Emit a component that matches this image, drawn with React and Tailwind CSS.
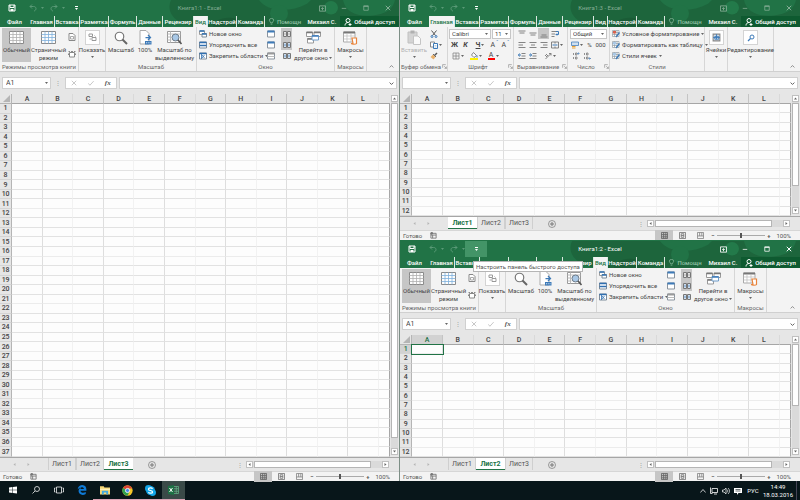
import React from "react";

const COLUMNS = ["A", "B", "C", "D", "E", "F", "G", "H", "I", "J", "K", "L"];
const SHEETS = ["Лист1", "Лист2", "Лист3"];
const TABS = [
  { name: "Главная", width: "w-[26px]" },
  { name: "Вставка", width: "w-[25px]" },
  { name: "Разметка", width: "w-[29px]" },
  { name: "Формуль", width: "w-[28px]" },
  { name: "Данные", width: "w-[26px]" },
  { name: "Рецензир", width: "w-[31px]" },
  { name: "Вид", width: "w-[14px]" },
  { name: "Надстрой", width: "w-[29px]" },
  { name: "Команда", width: "w-[28px]" },
];

/* ---------- icons ---------- */

function Svg({ size = "size-[8px]", box = "0 0 16 16", children }) {
  return (
    <svg
      className={`${size} shrink-0`}
      viewBox={box}
      fill="none"
      stroke="currentColor"
      strokeWidth="2"
      aria-hidden="true"
    >
      {children}
    </svg>
  );
}

function Caret({ className = "text-[#666]" }) {
  return (
    <svg className={`w-[3px] h-[2px] shrink-0 ${className}`} viewBox="0 0 6 4">
      <path d="M0 0h6L3 4z" fill="currentColor" />
    </svg>
  );
}

function SaveIcon() {
  return (
    <Svg>
      <path d="M2 2h12v12H2zM4 2v5h8V2" />
      <path d="M5 10h6v4H5z" fill="currentColor" stroke="none" />
    </Svg>
  );
}

function UndoIcon({ flip }) {
  return (
    <Svg>
      <g transform={flip ? "translate(16 0) scale(-1 1)" : undefined}>
        <path d="M6 1L2 5l4 4M2 5h7c7 0 6 8 1 9" />
      </g>
    </Svg>
  );
}

function GridIcon({ accent = "#b0b0b0", dim = "#8a8a8a" }) {
  return (
    <Svg size="w-[15px] h-[13px]" box="0 0 30 26">
      <path d="M1 1h28v24H1z" fill="#fdfdfd" stroke={dim} />
      <path d="M1 7h28M1 13h28M1 19h28M8 1v24M15 1v24M22 1v24" stroke={accent} strokeWidth="1.6" />
    </Svg>
  );
}

function PageIcon() {
  return (
    <Svg>
      <path d="M2 1h8l4 4v10H2z" fill="#fff" stroke="#888" />
      <path d="M5 7h6v5H5z" stroke="#aaa" />
    </Svg>
  );
}

function CustomViewIcon() {
  return (
    <Svg>
      <path d="M3 5h10v9H3z" fill="#fff" stroke="#888" />
      <path d="M1 3h3M6 3h4M12 3h3M1 7v3M15 7v3" stroke="#888" />
    </Svg>
  );
}

function ShowIcon() {
  return (
    <Svg size="size-[9px]" box="0 0 18 18">
      <path d="M2 2h7v5H2zM8 9h8v6H8z" stroke="#999" />
      <path d="M13 5l2 2M3 12h3" stroke="#aaa" />
    </Svg>
  );
}

function ZoomIcon() {
  return (
    <Svg size="size-[14px]" box="0 0 28 28">
      <circle cx="11" cy="11" r="8.5" fill="#fff" stroke="#777" strokeWidth="2.4" />
      <path d="M17 17l9 9" stroke="#666" strokeWidth="4" />
    </Svg>
  );
}

function HundredIcon() {
  return (
    <Svg size="w-[13px] h-[15px]" box="0 0 26 30">
      <path d="M2 1h12l6 6v21H2z" fill="#fff" stroke="#aaa" />
      <path d="M13 15h9M18 10l5 5-5 5" stroke="#3d7ab8" strokeWidth="2.5" />
      <path d="M12 22h13v7H12z" fill="#3d7ab8" stroke="none" />
      <path d="M14 25.5h9" stroke="#cfe0f0" strokeDasharray="2 1.5" />
    </Svg>
  );
}

function ZoomSelectionIcon() {
  return (
    <Svg size="w-[15px] h-[14px]" box="0 0 30 28">
      <path d="M1 1h26v22H1z" fill="#fff" stroke="#999" />
      <path d="M1 6h26M1 12h8M1 18h8M7 1v22" stroke="#bbb" />
      <circle cx="17" cy="13" r="7" fill="#a9c8e6" stroke="#6d7b88" />
      <path d="M22 18l7 8" stroke="#555" strokeWidth="3.4" />
    </Svg>
  );
}

function WindowIcon({ double, freeze }) {
  return (
    <Svg>
      <path d="M1 2h14v12H1z" fill="#fff" stroke="#7d8b99" />
      <path d="M1 3h14" stroke="#2f6fb0" strokeWidth="3" />
      {double && <path d="M1 9h14" stroke="#2f6fb0" strokeWidth="3" />}
      {freeze && <path d="M6 6l5 6M11 6l-5 6M5 3v11" stroke="#2f6fb0" strokeWidth="1.6" />}
    </Svg>
  );
}

function NewWindowIcon() {
  return (
    <Svg>
      <path d="M1 2h10v7H1z" fill="#fff" stroke="#999" />
      <path d="M1 2h10" stroke="#2f6fb0" strokeWidth="3" />
      <path d="M6 7h9v7H6z" fill="#fff" stroke="#7d8b99" />
      <path d="M6 8h9" stroke="#2f6fb0" strokeWidth="3" />
    </Svg>
  );
}

function PaneIcon({ gray }) {
  return (
    <Svg>
      <path d="M1 2h14v12H1z" fill="#fff" stroke="#8a949e" />
      <path d="M1 3h14" stroke={gray ? "#999" : "#3d7ab8"} strokeWidth="4" />
      {gray && <path d="M1 9h14" stroke="#bbb" />}
    </Svg>
  );
}

function SideIcon({ sync }) {
  return (
    <Svg>
      <path d="M1 3h6v10H1zM9 3h6v10H9z" fill="#fff" stroke="#777" />
      <path d="M4 5v6M12 5v6" stroke={sync ? "#3d7ab8" : "#999"} />
    </Svg>
  );
}

function SwitchIcon() {
  return (
    <Svg size="w-[15px] h-[13px]" box="0 0 30 26">
      <path d="M1 2h12v9H1zM16 2h13v9H16zM3 15h12v9H3z" fill="#fff" stroke="#999" />
      <path d="M1 3h12M16 3h13M3 16h12" stroke="#777" strokeWidth="3" />
      <path d="M12 9h13v9H12z" fill="#fff" stroke="#6f9cc9" />
      <path d="M12 10h13" stroke="#3d7ab8" strokeWidth="3" />
    </Svg>
  );
}

function MacroIcon() {
  return (
    <Svg size="w-[15px] h-[14px]" box="0 0 30 28">
      <path d="M1 2h23v20H1z" fill="#fff" stroke="#aaa" />
      <path d="M1 3h23" stroke="#777" strokeWidth="4" />
      <path d="M1 10h23M1 16h23M8 5v17M16 5v17" stroke="#bbb" strokeWidth="1.4" />
      <path d="M18 14h9v11c-1 2-10 2-10 0h3z" fill="#fff" stroke="#e8833a" strokeWidth="2.4" />
    </Svg>
  );
}

function PasteIcon() {
  return (
    <Svg size="w-[14px] h-[15px]" box="0 0 28 30">
      <path d="M2 4h18v22H2z" fill="#d4d4d4" stroke="#c0c0c0" />
      <path d="M7 1h8v6H7z" fill="#b0b0b0" stroke="none" />
      <path d="M13 12h9l5 5v12H13z" fill="#fafafa" stroke="#c4c4c4" />
    </Svg>
  );
}

function CutIcon() {
  return (
    <Svg>
      <path d="M3 1l8 10M13 1L5 11" stroke="#555" />
      <circle cx="4" cy="13" r="2" stroke="#3d7ab8" />
      <circle cx="12" cy="13" r="2" stroke="#3d7ab8" />
    </Svg>
  );
}

function CopyIcon() {
  return (
    <Svg>
      <path d="M1 2h8v10H1z" fill="#fff" stroke="#888" />
      <path d="M7 5h8v10H7z" fill="#fff" stroke="#3d7ab8" />
      <path d="M9 9h4M9 12h4" stroke="#6f9cc9" strokeWidth="1" />
    </Svg>
  );
}

function BrushIcon() {
  return (
    <Svg>
      <path d="M14 2L9 7" stroke="#555" strokeWidth="3" />
      <path d="M6 5l5 5-4 5-6-5z" fill="#e8b06a" stroke="none" />
      <path d="M6 4l6 6" stroke="#666" />
    </Svg>
  );
}

function BordersIcon() {
  return (
    <Svg>
      <path d="M2 2h12v12H2zM8 2v12M2 8h12" stroke="#888" strokeWidth="1.6" />
    </Svg>
  );
}

function FillIcon() {
  return (
    <Svg>
      <path d="M7 1l6 6-5 4-5-5z" fill="#fff" stroke="#666" strokeWidth="1.6" />
      <path d="M14 7v4" stroke="#3d7ab8" />
      <path d="M0 14h16" stroke="#fff000" strokeWidth="4" />
    </Svg>
  );
}

function LinesIcon({ d, accent }) {
  return (
    <Svg>
      <path d={d} stroke="#777" strokeWidth="1.8" />
      {accent && <path d={accent} stroke="#3d7ab8" />}
    </Svg>
  );
}

function CoinsIcon() {
  return (
    <Svg>
      <path d="M1 2h14v7H1z" fill="#cfe0f0" stroke="#3d7ab8" strokeWidth="1.5" />
      <path d="M2 11h7M2 14h7" stroke="#e8a33a" strokeWidth="2.4" />
    </Svg>
  );
}

function DecimalIcon({ left }) {
  return (
    <Svg>
      <path d="M3 2v4M7 2h3v4H7zM3 10v4M7 10h3v4H7z" stroke="#777" strokeWidth="1.6" />
      <path d={left ? "M15 3h-3M13 1l-2 2 2 2" : "M11 13h4M13 11l2 2-2 2"} stroke="#3d7ab8" strokeWidth="1.5" />
    </Svg>
  );
}

function StyleIcon({ accent }) {
  return (
    <Svg>
      <path d="M1 1h13v12H1zM1 5h13M1 9h13M5 1v12M10 1v12" fill="#fff" stroke="#8a949e" strokeWidth="1.3" />
      <path d="M2 2h6v5H2z" fill={accent} stroke="none" />
      <path d="M15 5l-7 9" stroke="#3d7ab8" strokeWidth="2.6" />
    </Svg>
  );
}

function CellsIcon() {
  return (
    <Svg size="size-[9px]">
      <path d="M2 2h12v12H2z" fill="#d7e4f0" stroke="#888" />
      <path d="M5 6h7v5H5zM8 2v9M2 8h12" stroke="#3d7ab8" strokeWidth="1.6" />
    </Svg>
  );
}

function FindIcon() {
  return (
    <Svg>
      <circle cx="10" cy="6" r="4" stroke="#3d7ab8" />
      <path d="M7 9l-5 5" stroke="#3d7ab8" strokeWidth="2.6" />
    </Svg>
  );
}

/* ---------- ribbon ---------- */

function Group({ label, launcher, width, children }) {
  return (
    <div className={`${width} shrink-0 flex flex-col border-r border-[#d6d6d6]`}>
      <div className="flex-1 flex pt-px">{children}</div>
      <div className="h-[9px] flex items-center text-[#666]">
        <span className="flex-1 text-center">{label}</span>
        {launcher && (
          <Svg size="size-[5px]">
            <path d="M2 12V2h10M7 7l7 7M14 8v6H8" stroke="#888" />
          </Svg>
        )}
      </div>
    </div>
  );
}

function BigButton({ icon, lines, width, arrow, active, boxed, muted }) {
  return (
    <button
      type="button"
      className={`${width} shrink-0 flex flex-col items-center ${active ? "bg-[#c6c6c6]" : ""} ${
        muted ? "text-[#b0b0b0]" : ""
      }`}
    >
      <span
        className={`h-[15px] mt-[2px] flex items-center justify-center ${
          boxed ? "w-[15px] bg-white border border-[#d4d4d4]" : ""
        }`}
      >
        {icon}
      </span>
      <span className="mt-px">
        {lines.map((line, i) => (
          <span key={line} className="flex items-center justify-center gap-px h-[8px]">
            {line}
            {arrow === "inline" && i === lines.length - 1 && <Caret />}
          </span>
        ))}
      </span>
      {arrow === "below" && (
        <span className="h-[6px] flex items-center">
          <Caret />
        </span>
      )}
    </button>
  );
}

function ListButton({ icon, children, arrow }) {
  return (
    <button type="button" className="h-[11px] flex items-center gap-[2px]">
      {icon}
      <span>{children}</span>
      {arrow && <Caret />}
    </button>
  );
}

function IconButton({ label, active, width = "w-[11px]", children }) {
  return (
    <button
      type="button"
      aria-label={label}
      className={`${width} h-[11px] shrink-0 flex items-center justify-center gap-px ${
        active ? "bg-[#c6c6c6]" : ""
      }`}
    >
      {children}
    </button>
  );
}

function ViewRibbon() {
  return (
    <>
      <Group label="Режимы просмотра книги" width="w-[79px]">
        <BigButton icon={<GridIcon />} lines={["Обычный"]} width="w-[29px] ml-[2px]" active />
        <BigButton icon={<GridIcon accent="#7fb0dc" />} lines={["Страничный", "режим"]} width="w-[35px]" />
        <div className="flex-1 flex flex-col justify-around items-center">
          <IconButton label="Разметка страницы"><PageIcon /></IconButton>
          <IconButton label="Представления"><CustomViewIcon /></IconButton>
        </div>
      </Group>
      <Group label="" width="w-[27px]">
        <BigButton icon={<ShowIcon />} lines={["Показать"]} width="w-[26px]" arrow="below" boxed />
      </Group>
      <Group label="Масштаб" width="w-[91px]">
        <BigButton icon={<ZoomIcon />} lines={["Масштаб"]} width="w-[30px]" />
        <BigButton icon={<HundredIcon />} lines={["100%"]} width="w-[18px]" />
        <BigButton icon={<ZoomSelectionIcon />} lines={["Масштаб по", "выделенному"]} width="w-[41px]" />
      </Group>
      <Group label="Окно" width="w-[138px]">
        <div className="w-[68px] pl-[2px] flex flex-col">
          <ListButton icon={<NewWindowIcon />}>Новое окно</ListButton>
          <ListButton icon={<WindowIcon double />}>Упорядочить все</ListButton>
          <ListButton icon={<WindowIcon freeze />} arrow>Закрепить области</ListButton>
        </div>
        <div className="w-[16px] flex flex-col">
          <IconButton label="Разделить"><PaneIcon /></IconButton>
          <IconButton label="Скрыть"><PaneIcon /></IconButton>
          <IconButton label="Отобразить"><PaneIcon gray /></IconButton>
        </div>
        <div className="flex flex-col">
          <IconButton label="Рядом" active><SideIcon /></IconButton>
          <IconButton label="Синхронная прокрутка" active><SideIcon sync /></IconButton>
          <IconButton label="Восстановить расположение"><SideIcon sync /></IconButton>
        </div>
        <BigButton icon={<SwitchIcon />} lines={["Перейти в", "другое окно"]} width="w-[42px]" arrow="inline" />
      </Group>
      <Group label="Макросы" width="w-[32px]">
        <BigButton icon={<MacroIcon />} lines={["Макросы"]} width="w-[31px]" arrow="below" />
      </Group>
    </>
  );
}

function RibbonSelect({ label, value, width }) {
  return (
    <span className={`${width} relative flex items-center bg-white border border-[#c6c6c6] h-[10px]`}>
      <select aria-label={label} defaultValue={value} className="w-full appearance-none pl-[2px] outline-none">
        <option>{value}</option>
      </select>
      <span className="absolute right-[2px] pointer-events-none">
        <Caret />
      </span>
    </span>
  );
}

function HomeRibbon() {
  return (
    <>
      <Group label="Буфер обмена" width="w-[48px]" launcher>
        <BigButton icon={<PasteIcon />} lines={["Вставить"]} width="w-[28px]" arrow="below" muted />
        <div className="flex flex-col">
          <IconButton label="Вырезать"><CutIcon /></IconButton>
          <IconButton label="Копировать" width="w-[15px]"><CopyIcon /><Caret /></IconButton>
          <IconButton label="Формат по образцу"><BrushIcon /></IconButton>
        </div>
      </Group>
      <Group label="Шрифт" width="w-[66px]" launcher>
        <div className="flex flex-col pl-px">
          <div className="h-[11px] flex items-center gap-px">
            <RibbonSelect label="Гарнитура" value="Calibri" width="w-[42px]" />
            <RibbonSelect label="Размер" value="11" width="w-[19px]" />
          </div>
          <div className="flex text-[7px]">
            <IconButton label="Полужирный"><b>Ж</b></IconButton>
            <IconButton label="Курсив"><b><i>К</i></b></IconButton>
            <IconButton label="Подчёркнутый" width="w-[18px]"><b><u>Ч</u></b><Caret /></IconButton>
            <IconButton label="Увеличить">A<sup className="text-[#3d7ab8]">ˆ</sup></IconButton>
            <IconButton label="Уменьшить">A<sup className="text-[#3d7ab8]">ˇ</sup></IconButton>
          </div>
          <div className="flex text-[7px]">
            <IconButton label="Границы" width="w-[18px]"><BordersIcon /><Caret /></IconButton>
            <IconButton label="Заливка" width="w-[18px]"><FillIcon /><Caret /></IconButton>
            <IconButton label="Цвет" width="w-[16px]">
              <span className="h-[8px] w-[7px] text-center leading-[7px] border-b-2 border-[#f00]">A</span>
              <Caret />
            </IconButton>
          </div>
        </div>
      </Group>
      <Group label="Выравнивание" width="w-[54px]" launcher>
        <div className="flex flex-col pl-[2px]">
          <div className="flex">
            <IconButton label="По верхнему краю"><LinesIcon d="M1 2h14M3 6h10" /></IconButton>
            <IconButton label="По середине"><LinesIcon d="M1 6h14M3 10h10" /></IconButton>
            <IconButton label="По нижнему краю" active><LinesIcon d="M3 10h10M1 14h14" /></IconButton>
            <IconButton label="Перенос"><LinesIcon d="M1 3h9M1 8h7M1 13h6" accent="M10 3h5v6h-5M12 7l-2 2 2 2" /></IconButton>
          </div>
          <div className="flex">
            <IconButton label="По левому краю"><LinesIcon d="M1 3h14M1 8h9M1 13h14" /></IconButton>
            <IconButton label="По центру"><LinesIcon d="M1 3h14M4 8h8M1 13h14" /></IconButton>
            <IconButton label="По правому краю"><LinesIcon d="M1 3h14M6 8h9M1 13h14" /></IconButton>
            <IconButton label="Объединить" width="w-[16px]">
              <LinesIcon d="M1 2h14v12H1zM8 2v3M8 11v3" accent="M3 8h10" />
              <Caret />
            </IconButton>
          </div>
          <div className="flex">
            <IconButton label="Уменьшить отступ"><LinesIcon d="M7 3h8M7 8h8M1 13h14" accent="M1 6h5M3 3L1 6l2 3" /></IconButton>
            <IconButton label="Увеличить отступ"><LinesIcon d="M7 3h8M7 8h8M1 13h14" accent="M0 6h5M3 3l2 3-2 3" /></IconButton>
            <IconButton label="Ориентация" width="w-[24px]">
              <LinesIcon d="M3 14L14 3M10 3h4v4M2 8l4-4M4 10l4-4" />
              <Caret />
            </IconButton>
          </div>
        </div>
      </Group>
      <Group label="Число" width="w-[42px]" launcher>
        <div className="flex flex-col pl-[2px]">
          <div className="h-[11px] flex items-center">
            <RibbonSelect label="Числовой формат" value="Общий" width="w-[37px]" />
          </div>
          <div className="flex">
            <IconButton label="Денежный" width="w-[14px]"><CoinsIcon /><Caret /></IconButton>
            <IconButton label="Процентный">%</IconButton>
            <IconButton label="С разделителями">000</IconButton>
          </div>
          <div className="flex">
            <IconButton label="Больше знаков"><DecimalIcon left /></IconButton>
            <IconButton label="Меньше знаков"><DecimalIcon /></IconButton>
          </div>
        </div>
      </Group>
      <Group label="Стили" width="w-[95px]">
        <div className="flex flex-col pl-[2px]">
          <ListButton icon={<StyleIcon accent="#d9604c" />} arrow>Условное форматирование</ListButton>
          <ListButton icon={<StyleIcon accent="#a9c8e6" />} arrow>Форматировать как таблицу</ListButton>
          <ListButton icon={<StyleIcon accent="#a9c8e6" />} arrow>Стили ячеек</ListButton>
        </div>
      </Group>
      <Group label="" width="w-[23px]">
        <BigButton icon={<CellsIcon />} lines={["Ячейки"]} width="w-[22px]" arrow="below" boxed />
      </Group>
      <Group label="" width="w-[46px]">
        <BigButton icon={<FindIcon />} lines={["Редактирование"]} width="w-[45px]" arrow="below" boxed />
      </Group>
    </>
  );
}

/* ---------- window parts ---------- */

function TitleArt() {
  return (
    <svg
      className="absolute inset-y-0 right-0 h-full w-[236px]"
      viewBox="0 0 236 28"
      preserveAspectRatio="none"
      aria-hidden="true"
    >
      <path d="M8 0h228v28H40C14 28 2 14 8 0z" fill="#1d653c" />
      <path d="M96 0c8 12 30 14 48 4l4-4zM180 0c2 12 14 18 30 16s20-8 22-16z" fill="#217346" />
      <circle cx="116" cy="14" r="9" fill="#217346" />
      <circle cx="168" cy="8" r="7" fill="#237a4a" />
      <path d="M50 28c0-8 14-12 24-8l10 8z" fill="#1a5c36" />
    </svg>
  );
}

function TitleBar({ title, active, menuOpen }) {
  return (
    <div className={`relative h-[16px] flex items-center ${active ? "text-white" : "text-[#86ae96]"}`}>
      <div className="flex-1 basis-0 self-stretch flex items-center">
        <button type="button" aria-label="Сохранить" className="ml-[8px] text-white"><SaveIcon /></button>
        <button type="button" aria-label="Отменить" className="ml-[13px] flex items-center gap-[4px] text-[#5a9a77]">
          <UndoIcon />
          <Caret className="text-[#5a9a77]" />
        </button>
        <button type="button" aria-label="Вернуть" className="ml-[6px] flex items-center gap-[4px] text-[#5a9a77]">
          <UndoIcon flip />
          <Caret className="text-[#5a9a77]" />
        </button>
        <button
          type="button"
          aria-label="Настроить панель быстрого доступа"
          className={`w-[22px] self-stretch flex flex-col items-center justify-center gap-px ${
            menuOpen ? "bg-[#439467]" : ""
          }`}
        >
          <span className="w-[3px] h-px bg-white" />
          <Caret className="text-white" />
        </button>
      </div>
      <span>{title}</span>
      <div className="flex-1 basis-0 flex justify-end">
        <button type="button" aria-label="Параметры ленты" className="w-[22px] flex justify-center">
          <Svg size="size-[7px]"><path d="M1 2h14v12H1zM8 12V6M5 9l3-3 3 3" /></Svg>
        </button>
        <button type="button" aria-label="Свернуть" className="w-[22px] flex justify-center">
          <Svg size="size-[6px]"><path d="M2 9h12" /></Svg>
        </button>
        <button type="button" aria-label="Развернуть" className="w-[22px] flex justify-center">
          <Svg size="size-[6px]"><path d="M2 2h12v12H2zM2 4h12" /></Svg>
        </button>
        <button type="button" aria-label="Закрыть" className="w-[22px] flex justify-center">
          <Svg size="size-[6px]"><path d="M2 2l12 12M14 2L2 14" strokeWidth="2.6" /></Svg>
        </button>
      </div>
    </div>
  );
}

function TabStrip({ current }) {
  return (
    <div className="relative h-[11px] flex text-white font-medium">
      <button type="button" className="w-[29px]">Файл</button>
      {TABS.map((tab) => (
        <button
          key={tab.name}
          type="button"
          className={`${tab.width} shrink-0 whitespace-nowrap overflow-hidden border-r border-[#dbe9e1] ${
            tab.name === current ? "bg-[#f3f3f3] text-[#217346]" : ""
          }`}
        >
          {tab.name}
        </button>
      ))}
      <button type="button" className="flex-1 flex items-center justify-center gap-[2px] text-[#8fc0a4]">
        <Svg size="size-[7px]">
          <path d="M6 11c0-3-3-3-3-6a5 4 0 0110 0c0 3-3 3-3 6zM6 14h4" strokeWidth="1.6" />
        </Svg>
        Помощн
      </button>
      <button type="button" className="w-[36px]">Михаил С.</button>
      <button type="button" className="w-[59px] flex items-center justify-center gap-[2px] bg-[#0e5a30]">
        <Svg size="size-[8px]">
          <circle cx="8" cy="5" r="4" />
          <path d="M2 15c0-4 3-6 6-6M9 13h6M12 10v6" />
        </Svg>
        Общий доступ
      </button>
    </div>
  );
}

function FormulaBar({ cell }) {
  return (
    <div className="h-[22px] shrink-0 flex items-center pl-[2px] pr-[2px]">
      <div className="w-[49px] h-[12px] flex items-center bg-white border border-[#d0d0d0] pr-[2px]">
        <input aria-label="Имя" defaultValue={cell} className="min-w-0 flex-1 pl-[3px] text-[7px] outline-none" />
        <Caret />
      </div>
      <span className="w-[14px] text-center text-[#999]">⋮</span>
      <div className="w-[52px] h-[12px] flex items-center justify-around bg-white border border-[#d0d0d0] text-[#b5b5b5]">
        <button type="button" aria-label="Отмена">
          <Svg size="size-[6px]"><path d="M2 2l12 12M14 2L2 14" /></Svg>
        </button>
        <button type="button" aria-label="Ввод">
          <Svg size="size-[6px]"><path d="M1 9l4 5L15 3" /></Svg>
        </button>
        <button type="button" className="font-['Liberation_Serif',serif] italic font-bold text-[7px] text-[#555]">
          fx
        </button>
      </div>
      <div className="ml-[2px] flex-1 h-[12px] flex items-center bg-white border border-[#d0d0d0] pr-[2px]">
        <input aria-label="Строка формул" className="min-w-0 flex-1 outline-none" />
        <Svg size="size-[5px]"><path d="M2 5l6 6 6-6" stroke="#555" strokeWidth="3" /></Svg>
      </div>
    </div>
  );
}

function Sheet({ rows, selected }) {
  return (
    <table className="w-full h-full table-fixed border-separate border-spacing-0 text-[7px] leading-[8px] text-[#444]">
      <colgroup>
        <col className="w-[12px]" />
        {COLUMNS.map((c) => (
          <col key={c} className="w-[30px]" />
        ))}
        <col className="w-[11px]" />
      </colgroup>
      <thead>
        <tr className="h-[10px]">
          <th className="p-0 border-r border-b border-[#b5b5b5]">
            <svg className="size-[7px] ml-auto mr-px" viewBox="0 0 8 8">
              <path d="M8 0v8H0z" fill="#b5b5b5" />
            </svg>
          </th>
          {COLUMNS.map((c, i) => (
            <th
              key={c}
              className={`p-0 font-medium border-r border-b border-b-[#a6a6a6] ${
                i % 2 ? "border-r-[#d9d9d9]" : "border-r-[#c4c4c4]"
              } ${selected && i === 0 ? "bg-[#d2d2d2] text-[#217346]" : ""}`}
            >
              {c}
            </th>
          ))}
          <th className="p-0 border-b border-b-[#a6a6a6]" />
        </tr>
      </thead>
      <tbody>
        {Array.from({ length: rows }, (_, r) => (
          <tr key={r} className="h-[9px]">
            <th
              className={`p-0 font-medium border-r border-r-[#b5b5b5] border-b border-b-[#d4d4d4] ${
                selected && r === 0 ? "bg-[#d2d2d2] text-[#217346]" : "bg-[#e6e6e6]"
              }`}
            >
              {r + 1}
            </th>
            {COLUMNS.map((c, i) => (
              <td
                key={c}
                className={`p-0 bg-[#fdfdfd] border-b border-r ${
                  r % 5 === 0 ? "border-b-[#ececec]" : "border-b-[#e2e2e2]"
                } ${i % 2 ? "border-r-[#f2f2f2]" : "border-r-[#dedede]"} ${
                  selected && r === 0 && i === 0 ? "outline outline-[#217346] relative" : ""
                }`}
              />
            ))}
            <td className="p-0 bg-[#fdfdfd] border-b border-b-[#e2e2e2] border-r border-r-[#a6a6a6]" />
          </tr>
        ))}
      </tbody>
    </table>
  );
}

function ArrowButton({ label, d }) {
  return (
    <button
      type="button"
      aria-label={label}
      className="size-[7px] shrink-0 flex items-center justify-center bg-white border border-[#c0c0c0]"
    >
      <svg className="size-[3px]" viewBox="0 0 6 6">
        <path d={d} fill="#666" />
      </svg>
    </button>
  );
}

function VerticalScroll({ thumb }) {
  return (
    <div className="w-[9px] shrink-0 flex flex-col items-center pt-px pb-[2px]">
      <ArrowButton label="Вверх" d="M0 5h6L3 1z" />
      <div className="flex-1 w-[7px] pt-px flex flex-col bg-[#dadada]">
        <div className={`${thumb} bg-white border border-[#b5b5b5]`} />
      </div>
      <ArrowButton label="Вниз" d="M0 1h6L3 5z" />
    </div>
  );
}

function SheetTabs({ current }) {
  return (
    <div className="h-[14px] shrink-0 flex text-[#555] border-t border-[#a6a6a6]">
      <div className="w-[48px] flex items-center gap-[11px] pl-[13px] text-[#b5b5b5]">
        <svg className="size-[3px]" viewBox="0 0 6 6"><path d="M5 0v6L1 3z" fill="currentColor" /></svg>
        <svg className="size-[3px]" viewBox="0 0 6 6"><path d="M1 0v6l4-3z" fill="currentColor" /></svg>
      </div>
      {SHEETS.map((name) => (
        <button
          key={name}
          type="button"
          className={
            name === current
              ? "w-[29px] h-[12px] bg-white text-[7px] font-bold text-[#217346] border-b border-[#217346]"
              : "w-[28px] h-[12px] text-[7px] border-x border-[#cfcfcf]"
          }
        >
          {name}
        </button>
      ))}
      <button type="button" aria-label="Новый лист" className="ml-[15px] text-[#777]">
        <Svg>
          <circle cx="8" cy="8" r="7" strokeWidth="1.4" />
          <path d="M8 4v8M4 8h8" />
        </Svg>
      </button>
      <div className="flex-1" />
      <span className="w-[9px] text-[#999] self-center">⋮</span>
      <div className="w-[143px] h-[7px] mr-[10px] self-center flex bg-[#dadada]">
        <ArrowButton label="Влево" d="M5 0v6L1 3z" />
        <div className="w-[117px] ml-px bg-white border border-[#b5b5b5]" />
        <span className="flex-1" />
        <ArrowButton label="Вправо" d="M1 0v6l4-3z" />
      </div>
    </div>
  );
}

function StatusBar() {
  return (
    <div className="h-[10px] shrink-0 flex items-center bg-[#f3f3f3] border-t border-[#d6d6d6] text-[#555] pl-[3px] pr-[9px]">
      <span className="w-[27px]">Готово</span>
      <Svg size="size-[7px]">
        <path d="M2 3h12v11H2zM2 7h12M6 7v7" stroke="#777" />
        <circle cx="4" cy="3" r="3" fill="#777" stroke="none" />
      </Svg>
      <div className="flex-1" />
      <IconButton label="Обычный" active width="w-[18px]">
        <Svg size="size-[7px]"><path d="M1 1h14v14H1zM1 6h14M1 11h14M6 1v14M11 1v14" stroke="#666" /></Svg>
      </IconButton>
      <IconButton label="Разметка страницы" width="w-[18px]">
        <Svg size="size-[7px]"><path d="M1 1h14v14H1zM5 4h6v8H5zM5 8h6" stroke="#777" /></Svg>
      </IconButton>
      <IconButton label="Страничный режим" width="w-[18px]">
        <Svg size="size-[7px]"><path d="M1 1h14v14H1zM6 1v8M11 1v8M1 9h14" stroke="#888" /></Svg>
      </IconButton>
      <button type="button" className="w-[8px] font-bold">−</button>
      <input
        type="range"
        aria-label="Масштаб"
        defaultValue="50"
        className="w-[48px] h-px appearance-none bg-[#aaa] [&::-webkit-slider-thumb]:appearance-none [&::-webkit-slider-thumb]:w-[2px] [&::-webkit-slider-thumb]:h-[5px] [&::-webkit-slider-thumb]:bg-[#555]"
      />
      <button type="button" className="w-[8px] font-bold">+</button>
      <span className="w-[18px] text-right">100%</span>
    </div>
  );
}

function ExcelWindow({ title, tab, sheet, rows, cell, active, selected, tooltip, thumb, className = "" }) {
  return (
    <section className={`relative flex flex-col min-h-0 bg-[#e6e6e6] ${className}`}>
      <header className="relative shrink-0 bg-[#217346]">
        <TitleArt />
        <TitleBar title={title} active={active} menuOpen={Boolean(tooltip)} />
        <TabStrip current={tab} />
      </header>
      <div className="relative h-[45px] shrink-0 flex whitespace-nowrap bg-[#f3f3f3] border-b border-[#d0d0d0]">
        {tab === "Вид" ? <ViewRibbon /> : <HomeRibbon />}
        <button type="button" aria-label="Свернуть ленту" className="ml-auto self-end mr-[5px] mb-[2px]">
          <Svg size="size-[5px]"><path d="M2 11l6-6 6 6" stroke="#555" /></Svg>
        </button>
      </div>
      <FormulaBar cell={cell} />
      <div className="flex-1 min-h-0 flex">
        <div className="flex-1 min-w-0">
          <Sheet rows={rows} selected={selected} />
        </div>
        <VerticalScroll thumb={thumb} />
      </div>
      <SheetTabs current={sheet} />
      <StatusBar />
      {tooltip && (
        <div
          role="tooltip"
          className="absolute left-[73px] top-[20px] h-[11px] px-[2px] flex items-center bg-white border border-[#b5b5b5] text-[#555] whitespace-nowrap"
        >
          {tooltip}
        </div>
      )}
    </section>
  );
}

/* ---------- taskbar ---------- */

function TaskButton({ label, running, active, children }) {
  return (
    <button
      type="button"
      aria-label={label}
      className={`w-[23px] flex items-center justify-center border-b ${
        running ? "border-[#d9a3b4]" : "border-transparent"
      } ${active ? "bg-[#3a4a48]" : ""}`}
    >
      {children}
    </button>
  );
}

function Taskbar() {
  return (
    <footer className="h-[19px] shrink-0 flex bg-[#08161a] text-white pl-px">
      <TaskButton label="Пуск">
        <Svg><path d="M0 3l7-1v5.500H0zM8 2l8-1v6.500H8zM0 8.500h7V14l-7-1zM8 8.500h8V15l-8-1z" fill="#fff" stroke="none" /></Svg>
      </TaskButton>
      <TaskButton label="Поиск">
        <Svg><circle cx="10" cy="6" r="5" strokeWidth="1.500" /><path d="M6 10l-5 5" strokeWidth="1.500" /></Svg>
      </TaskButton>
      <TaskButton label="Представление задач">
        <Svg size="w-[10px] h-[8px]" box="0 0 20 16">
          <path d="M5 2h10v12H5zM3 4H1v8h2M17 4h2v8h-2" strokeWidth="1.500" />
        </Svg>
      </TaskButton>
      <TaskButton label="Edge">
        <Svg size="size-[10px]">
          <path d="M1 7C2 2 5 0 8.500 0 13 0 15 3.500 15 7v2H5.500c0 3 5 4.500 8.500 2v3.500C8 18 2 14.500 2.500 9 3 6 5 4.500 6.500 4 5.500 5 5.500 6 5.500 6.500h5.500C11 2.500 5 2.500 1 7z" fill="#0f7ad6" stroke="none" />
        </Svg>
      </TaskButton>
      <TaskButton label="Проводник" running>
        <Svg size="size-[10px]">
          <path d="M0 2h6l1 2h9v11H0z" fill="#f8d775" stroke="none" />
          <path d="M0 6h16v2H0z" fill="#fff0b8" stroke="none" />
          <path d="M3 15V9h10v6h-3v-3H6v3z" fill="#3fa9e0" stroke="none" />
        </Svg>
      </TaskButton>
      <TaskButton label="Chrome" running>
        <Svg size="size-[11px]">
          <circle cx="8" cy="8" r="7.500" fill="#f5c628" stroke="none" />
          <path d="M8 8L1.500 4.200A7.500 7.500 0 0114.500 4.200L15 5H8z" fill="#dc4437" stroke="none" />
          <path d="M1.500 4.200A7.500 7.500 0 008 15.500l3-6-3-1z" fill="#2da04f" stroke="none" />
          <circle cx="8" cy="8" r="3" fill="#4a86e8" stroke="#fff" strokeWidth="1.200" />
        </Svg>
      </TaskButton>
      <TaskButton label="Skype" running>
        <Svg size="size-[11px]">
          <circle cx="5" cy="5" r="5" fill="#12a5e8" stroke="none" />
          <circle cx="11" cy="11" r="5" fill="#12a5e8" stroke="none" />
          <circle cx="8" cy="8" r="6.500" fill="#12a5e8" stroke="none" />
          <path d="M11 5.500C10 3.500 5 3.500 5 6s6 1.500 6 4-5 2.500-6 .5" stroke="#fff" strokeWidth="1.800" />
        </Svg>
      </TaskButton>
      <TaskButton label="Excel" running active>
        <Svg size="w-[11px] h-[10px]" box="0 0 22 20">
          <path d="M0 2l12-2v20L0 18z" fill="#1d7044" stroke="none" />
          <path d="M12 3h9v14h-9M12 7.500h9M12 12.500h9M16.500 3v14" stroke="#5fae83" strokeWidth="1.600" />
          <path d="M3 6l6 8M9 6l-6 8" stroke="#fff" />
        </Svg>
      </TaskButton>
      <div className="flex-1" />
      <div className="flex items-center gap-[4px]">
        <Svg size="size-[6px]"><path d="M1 12l7-8 7 8" /></Svg>
        <Svg><path d="M4 3h11v8H4zM8 14h6M1 1v12h4" strokeWidth="1.600" /></Svg>
        <Svg><path d="M1 6h3l4-4v12l-4-4H1zM10 5c2 2 2 4 0 6M12 2c4 4 4 8 0 12" strokeWidth="1.400" /></Svg>
        <Svg>
          <path d="M0 2h16v10H9l-3 4v-4H0z" fill="#fff" stroke="none" />
          <path d="M3 5h10M3 8h10" stroke="#08161a" strokeWidth="1.200" />
        </Svg>
        <span className="w-[14px] text-center">РУС</span>
      </div>
      <time className="w-[36px] flex flex-col justify-center text-center leading-[8px]">
        <span>14:49</span>
        <span>18.03.2016</span>
      </time>
      <div className="w-[4px] border-l border-[#445]" />
    </footer>
  );
}

function App() {
  return (
    <div className="h-screen flex flex-col overflow-hidden font-[Roboto,'Open_Sans',sans-serif] text-[6px] leading-[8px] text-[#444]">
      <main className="flex-1 min-h-0 flex">
        <ExcelWindow
          title="Книга1:1 - Excel"
          tab="Вид"
          sheet="Лист3"
          rows={37}
          cell="A1"
          thumb="h-[97%]"
          className="w-1/2 border-r border-[#7d8f86]"
        />
        <div className="w-1/2 flex flex-col">
          <ExcelWindow
            title="Книга1:3 - Excel"
            tab="Главная"
            sheet="Лист1"
            rows={12}
            cell=""
            thumb="h-4/5"
            className="flex-1 basis-0"
          />
          <ExcelWindow
            title="Книга1:2 - Excel"
            tab="Вид"
            sheet="Лист2"
            rows={12}
            cell="A1"
            thumb="h-3/5"
            tooltip="Настроить панель быстрого доступа"
            className="flex-1 basis-0 border-t border-t-[#217346]"
            active
            selected
          />
        </div>
      </main>
      <Taskbar />
    </div>
  );
}

export default App;
